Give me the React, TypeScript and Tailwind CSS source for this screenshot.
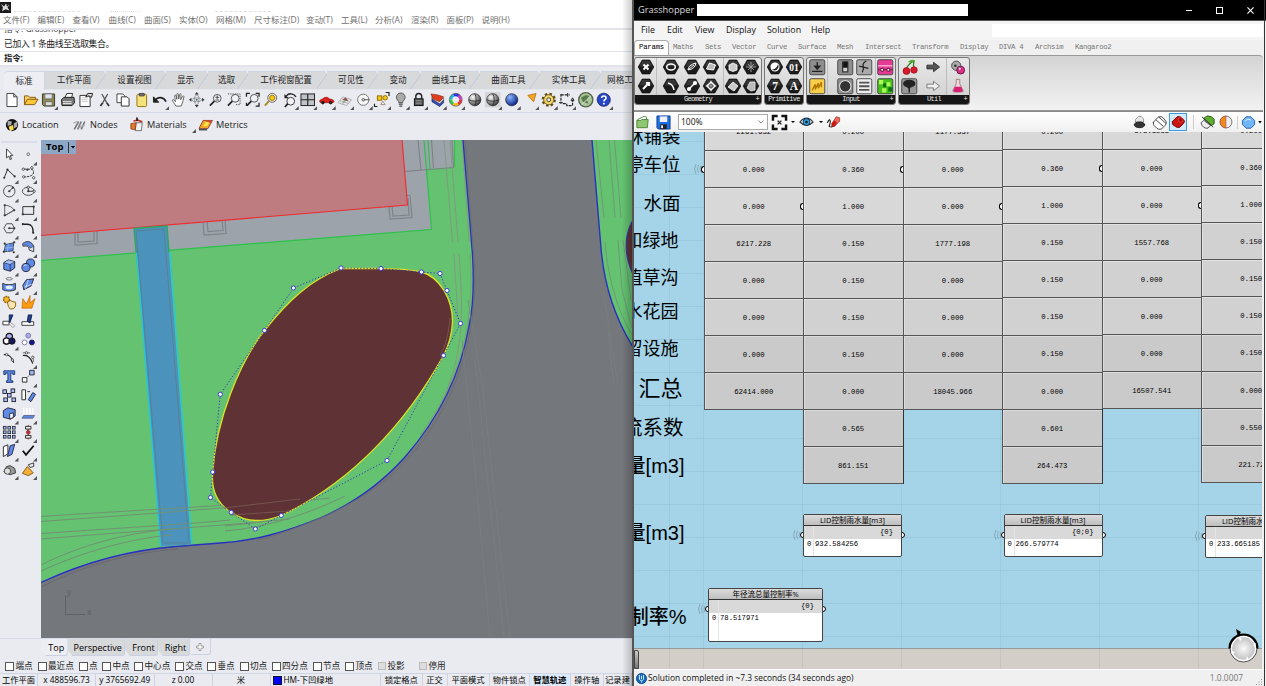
import type { ReactNode } from "react";

const UI = "font-['Open_Sans','Noto_Sans_CJK_SC',sans-serif]";

function Svg({ children, s = "w-4 h-4", vb = "0 0 16 16" }: { children: ReactNode; s?: string; vb?: string }) {
  return (
    <svg viewBox={vb} className={`${s} shrink-0 overflow-visible`} fill="none" stroke="#222" strokeWidth="1">
      {children}
    </svg>
  );
}

/* ---------- Rhino ---------- */

const menu: [string, string][] = [
  ["文件(F)", "w-[34.5px]"], ["编辑(E)", "w-[35px]"], ["查看(V)", "w-[36px]"], ["曲线(C)", "w-[35.5px]"],
  ["曲面(S)", "w-[35px]"], ["实体(O)", "w-[37px]"], ["网格(M)", "w-[38px]"], ["尺寸标注(D)", "w-[52px]"],
  ["变动(T)", "w-[35px]"], ["工具(L)", "w-[34px]"], ["分析(A)", "w-[36px]"], ["渲染(R)", "w-[35.5px]"],
  ["面板(P)", "w-[35px]"], ["说明(H)", "w-[35px]"],
];

const tabs: [string, string][] = [
  ["工作平面", "w-[61px]"], ["设置视图", "w-[60px]"], ["显示", "w-[42px]"], ["选取", "w-[40px]"],
  ["工作视窗配置", "w-[79px]"], ["可见性", "w-[51px]"], ["变动", "w-[43px]"], ["曲线工具", "w-[59px]"],
  ["曲面工具", "w-[60px]"], ["实体工具", "w-[61px]"], ["网格工", "w-[33px] pl-[8px]"],
];

const lens = <><circle cx="9.5" cy="6.5" r="4" fill="#eef2f6" stroke="#555" /><path d="M6.5 9.5L2 14" stroke="#222" strokeWidth="1.8" /></>;
const ball = (id: string, light: string, dark: string) => (
  <><defs><radialGradient id={id} cx=".35" cy=".3" r=".75"><stop offset="0" stopColor={light} /><stop offset="1" stopColor={dark} /></radialGradient></defs>
    <circle cx="8" cy="8" r="6.300" fill={`url(#${id})`} stroke="#222" strokeWidth=".7" /></>
);

const toolbar: { i: ReactNode; f?: boolean }[] = [
  { i: <path d="M3 1.5h7l3.500 3.500v10h-10.500zM10 1.500v3.500h3.500" fill="#fff" stroke="#444" /> },
  { i: <><path d="M1.500 13V4h4l1.500 1.500h6V8" fill="#f7d263" stroke="#8a5a10" /><path d="M1.500 13L4.500 7.500h11L12 13z" fill="#fbc63c" stroke="#8a5a10" /></> },
  { i: <><path d="M1.500 2h12.500v12.500h-11l-1.500-1.500z" fill="#8c8a52" stroke="#3c3b28" /><path d="M4 2h7.500v5H4z" fill="#dfe2ef" stroke="#555" strokeWidth=".6" /><path d="M4.500 10h7v4h-7z" fill="#ddd" stroke="#444" strokeWidth=".6" /></>, f: true },
  { i: <><path d="M5 6L7 1.500h6L12 6" fill="#fff" stroke="#333" /><path d="M1.500 8l2.500-2.500h10.500L15 11l-2.500 3H2z" fill="#777" stroke="#222" /><path d="M3 10h9M3 12h9" stroke="#eee" /></> },
  { i: <><path d="M2 3.500h8l2.500 2v9.500H2z" fill="#fff" stroke="#333" /><path d="M4 6h6M4 8h6M4 10h6" stroke="#aaa" strokeWidth=".7" /><path d="M8 5l2-3.500h5l-1 4-3-1.500z" fill="#ddd" stroke="#222" /></> },
  { i: <><path d="M5 2l5 9M11 2L6 11" stroke="#555" strokeWidth="1.300" /><path d="M6 11l-2.500 3.500M10 11l2.500 3.500" stroke="#333" strokeWidth="1.800" /></> },
  { i: <><path d="M2 2h6l2 2v7H2z" fill="#fff" stroke="#444" /><path d="M6.500 5h6l2 2v7.500h-8z" fill="#fff" stroke="#333" /></> },
  { i: <><rect x="3" y="2.500" width="10" height="12.500" rx="1" fill="#f6e27b" stroke="#96751b" /><path d="M5.500 1.500h5v2.500h-5z" fill="#777" stroke="#444" /></> },
  { i: <><path d="M3.500 8.500C6 4.500 12 5 14.500 10" stroke="#222" strokeWidth="1.700" /><path d="M1.500 5v5.500H7z" fill="#222" /></>, f: true },
  { i: <path d="M5 14.500C3.500 11.500 1.500 9.500 1.500 8.500s1.500-1 3 1.500L3.800 4c0-1.200 1.200-1.200 1.500 0L6 7.500V2.500c0-1.300 1.500-1.300 1.600 0L8 7.300l.9-4.800c.3-1.200 1.600-.9 1.500.3L10 8l1.900-3.500c.6-1 1.800-.4 1.400.8L12 10.500l-1.500 4z" fill="#fff" stroke="#555" strokeWidth=".9" /> },
  { i: <><ellipse cx="8" cy="8" rx="2.300" ry="5" stroke="#777" strokeWidth=".7" /><ellipse cx="8" cy="8" rx="5" ry="2" stroke="#777" strokeWidth=".7" /><path d="M8 0l2 2.500H6zM8 16l2-2.500H6zM0 8l2.500-2v4zM16 8l-2.500-2v4z" fill="#333" stroke="none" /><circle cx="8" cy="8" r="1" fill="#468" stroke="none" /></> },
  { i: <>{lens}<path d="M7.500 5.500h4M9.500 3.500v4M7.500 8.300h4" stroke="#333" strokeWidth=".8" /></> },
  { i: <>{lens}<path d="M2 2h12.500v11H10" stroke="#444" strokeDasharray="1.200 1.200" /></> },
  { i: <>{lens}<path d="M1.500 5V1.500H5M11 1.500h3.500V5M14.500 11v3.500H11M1.500 11v3.500" strokeWidth="1.300" /></> },
  { i: <><circle cx="9.500" cy="6" r="4.600" fill="#eee" stroke="#666" /><circle cx="9.500" cy="6" r="2.700" fill="#f7c914" stroke="#a67800" /><path d="M6 9.500L2 14" strokeWidth="2" stroke="#a58b22" /></> },
  { i: <><circle cx="9" cy="9.500" r="4" fill="#f2f2f2" stroke="#444" /><path d="M6 12L3 15.500" strokeWidth="1.800" /><path d="M4.500 4C7 1 12 1 14.500 5" strokeWidth="1.400" /><path d="M2.500 2v4.500H7z" fill="#222" stroke="none" /></>, f: true },
  { i: <><rect x="1" y="2" width="14" height="12" fill="#bfc2c7" stroke="#222" /><path d="M8 2v12M1 8h14" strokeWidth="1.200" /></>, f: true },
  { i: <><path d="M.5 9.500C1 7.500 3.500 7.700 4.500 6.500 6 5 9 5 10.500 7c1.500.5 4.500.5 5 3l-1 1H1.500z" fill="#df1f1c" stroke="#8e0d0d" strokeWidth=".7" /><circle cx="4" cy="11" r="1.300" fill="#333" stroke="#111" /><circle cx="12" cy="11" r="1.300" fill="#333" stroke="#111" /></>, f: true },
  { i: <><path d="M1 11L6 5l9 3-5 6zM3 9l9 3M5 7l8 3M5 13l6-6" stroke="#999" strokeWidth=".7" /><path d="M6 8l5 1-2-3z" fill="#666" stroke="#a33" strokeWidth=".6" /><path d="M8 9l-2 2" stroke="#3a3" /></>, f: true },
  { i: <><circle cx="7.500" cy="8" r="5.800" fill="#f5f5f5" stroke="#777" /><circle cx="7.500" cy="8" r="1.300" stroke="#555" /><path d="M8 8h6" stroke="#555" /></>, f: true },
  { i: <><rect x="3.500" y="4" width="4.500" height="4.500" fill="#f7c914" stroke="#946c00" /><circle cx="11.500" cy="6" r="2.300" fill="#f7c914" stroke="#946c00" /><path d="M7 13l2-3.500 2.500 3.500z" fill="#fff" stroke="#a87" /><path d="M12 .5h3.500V4M.5 12v3h3" strokeWidth="1.200" /></>, f: true },
  { i: <><path d="M6 11C6 9 3.500 8 3.500 5.500a4.500 4.500 0 019 0C12.500 8 10 9 10 11z" fill="#aaa" stroke="#555" /><path d="M6 12.500h4M6.500 14.500h3" stroke="#444" strokeWidth="1.300" /></>, f: true },
  { i: <><path d="M5 7V4.500a3 3 0 016 0V7" strokeWidth="1.500" /><rect x="3.500" y="7" width="9" height="7" fill="#555" stroke="#111" /><path d="M5 9h6M5 11.500h6" stroke="#999" /></>, f: true },
  { i: <><path d="M2 7l8 5 4-4v3l-4 4-8-5z" fill="#2e4fc0" stroke="#112" strokeWidth=".6" /><path d="M2 5l8 5 4-4v2l-4 4-8-5z" fill="#fff" stroke="#334" strokeWidth=".6" /><path d="M1 2l7 1 6 2-4 5-7-3z" fill="#e23c1c" stroke="#721" strokeWidth=".6" /></>, f: true },
  { i: <><circle cx="8" cy="8" r="5" stroke="#e33" strokeWidth="2.800" strokeDasharray="5.300 26.200" /><circle cx="8" cy="8" r="5" stroke="#f8b91a" strokeWidth="2.800" strokeDasharray="5.300 26.116" strokeDashoffset="-5.200" /><circle cx="8" cy="8" r="5" stroke="#3c4" strokeWidth="2.800" strokeDasharray="5.300 26.116" strokeDashoffset="-10.400" /><circle cx="8" cy="8" r="5" stroke="#2bd" strokeWidth="2.800" strokeDasharray="5.300 26.116" strokeDashoffset="-15.700" /><circle cx="8" cy="8" r="5" stroke="#33d" strokeWidth="2.800" strokeDasharray="5.300 26.116" strokeDashoffset="-20.900" /><circle cx="8" cy="8" r="5" stroke="#c3c" strokeWidth="2.800" strokeDasharray="5.300 26.116" strokeDashoffset="-26.100" /><circle cx="8" cy="8" r="6.600" stroke="#333" strokeWidth=".6" /></>, f: true },
  { i: <>{ball("b1", "#fff", "#333")}<path d="M8 2c2 2 2 10 0 12M2 8c3 2 9 2 12 0" stroke="#222" strokeWidth=".8" /></> },
  { i: <><path d="M0 0h16v16H0z" fill="#d4d5d8" stroke="none" />{ball("b2", "#fff", "#333")}<path d="M8 2c2 2 2 10 0 12M2 8c3 2 9 2 12 0" stroke="#222" strokeWidth=".8" /></>, f: true },
  { i: ball("b3", "#8db8ff", "#051c86"), f: true },
  { i: <><path d="M1 4l12-2.500L12 11z" fill="#f0e9dc" stroke="none" /><path d="M6 3.500l8.500-2L12 10z" fill="#f5a623" stroke="#a85d00" strokeWidth=".7" /></>, f: true },
  { i: <><circle cx="8" cy="8" r="5.800" stroke="#5d4b0e" strokeWidth="3" strokeDasharray="2.400 2.150" /><circle cx="8" cy="8" r="5.200" fill="#f3d568" stroke="#5d4b0e" strokeWidth=".8" /><circle cx="8" cy="8" r="2" fill="#eee" stroke="#443" /></>, f: true },
  { i: <><path d="M2 2v10M2 3h9M4 12h4v2h6V8" strokeWidth="1.200" strokeDasharray="3 1" /><path d="M9 1v4M14 6l-1.500 3h3zM0 11h4" /></>, f: true },
  { i: <><circle cx="8" cy="8" r="7.300" fill="#a9c795" stroke="#56634f" strokeWidth="1.400" /><path d="M3 6l5-3 4 1-3 4 2 4-6-2z" fill="#5a7b4e" stroke="none" /><path d="M4 13l9-9" stroke="#dde" strokeWidth="1" /></> },
  { i: <><circle cx="8" cy="8" r="6.800" fill="#2746c4" stroke="#13256c" strokeWidth=".8" /><path d="M5.800 6.300c0-3 4.600-3 4.600 0 0 1.700-2.300 1.600-2.300 3.400" stroke="#fff" strokeWidth="1.600" /><circle cx="8.100" cy="12" r="1" fill="#fff" stroke="none" /></>, f: true },
];

const dot = (x: number, y: number) => <circle cx={x} cy={y} r="1.200" fill="#333" stroke="none" />;
const ring = (x: number, y: number) => <circle cx={x} cy={y} r="1.300" fill="#fff" stroke="#222" strokeWidth=".8" />;
const cub = "#5f8ae6";
const side: { i: ReactNode; f?: boolean }[] = [
  { i: <path d="M5 2v10l2.500-2L9 14l1.500-.7L9 9.500h3z" fill="#fff" stroke="#333" /> },
  { i: <circle cx="8" cy="8" r="1.500" stroke="#666" />, f: true },
  { i: <><path d="M2.500 13L6 4l8 7.500" />{dot(2.5, 13)}{dot(6, 4)}{dot(14, 11.5)}</>, f: true },
  { i: <><path d="M3 3.500h9c4 3 2 9-9 8.500" strokeDasharray="3 1" />{ring(2.5, 3.5)}{ring(12, 2)}{ring(3, 12)}{ring(14, 13)}{dot(7, 4)}</>, f: true },
  { i: <><circle cx="8" cy="8" r="6.300" stroke="#444" /><path d="M8 8l4-4" />{dot(8, 8)}{dot(12, 4)}</>, f: true },
  { i: <><ellipse cx="8" cy="8" rx="6.500" ry="4.500" stroke="#444" /><path d="M8 4v4h6" />{ring(8, 3.5)}{dot(8, 8)}{ring(14.500, 8)}</>, f: true },
  { i: <><path d="M3 14V2.500C8 2.500 12 5 13.500 8zM3 14l10-6" stroke="#555" />{dot(3, 2.5)}{dot(3, 13.5)}{dot(13.5, 8)}</>, f: true },
  { i: <><path d="M2 4h12v8.500H2z" />{dot(2, 12.5)}{dot(14, 4)}</>, f: true },
  { i: <><path d="M2 8l3-5h6l3 5-3 5H5z" stroke="#444" /><path d="M8 8h5" />{dot(8, 8)}{dot(13.5, 8)}</>, f: true },
  { i: <><path d="M2 3.500h5c5 0 6.500 3 6.500 10" strokeWidth="1.600" />{dot(2, 3.5)}{dot(13.5, 13)}</>, f: true },
  { i: <><path d="M4 5l9-2-1 9-10 1z" fill={cub} stroke="#345" />{dot(3, 4)}{dot(13.5, 2.500)}{dot(2, 13)}{dot(13, 13.5)}<path d="M7 4L6 13M3 9l10-1" stroke="#bcd" strokeWidth=".6" /></>, f: true },
  { i: <><path d="M2 4c5-4 10-2 12 3v6l-5-2c0-4-3-5-6-4z" fill="#dbe4f6" stroke="#333" /><path d="M2 4c5-4 10-2 12 3l-4 2C8 5 5 5 2 7z" fill={cub} stroke="#333" strokeWidth=".6" /></>, f: true },
  { i: <><path d="M2 5l5-3 7 2v7l-5 3.500-7-2z" fill={cub} stroke="#223" /><path d="M2 5l7 2 5-3M9 7v7.500" stroke="#223" strokeWidth=".8" /><path d="M2.500 5L7 2.500l6.500 1.700L9 6.500z" fill="#a9c1f2" stroke="none" /></>, f: true },
  { i: <><circle cx="10.500" cy="5.500" r="4.500" fill={cub} stroke="#223" /><circle cx="5.500" cy="10.500" r="4.500" fill={cub} stroke="#223" /><path d="M3 9c1-1.300 2-1.500 3-1" stroke="#def" /></>, f: true },
  { i: <><ellipse cx="8" cy="2" rx="3.500" ry="1.300" stroke="#666" fill="#fff" /><path d="M.8 7v7c3 2 11 2 14 0V7c-3 2-11 2-14 0z" fill={cub} stroke="#333" /><ellipse cx="8" cy="11.500" rx="4" ry="2" fill="#e6eeff" stroke="none" /></>, f: true },
  { i: <><path d="M2 9l4-6 8-1-3 8-8 4z" fill={cub} stroke="#223" /><path d="M4 11l8-3M8 3l-3 10" stroke="#fff" strokeWidth=".7" /></>, f: true },
  { i: <><circle cx="5" cy="5" r="3.300" fill="#f7b52a" stroke="#8b5a00" strokeDasharray="2 .8" strokeWidth="1.500" /><path d="M6 8l3-2 2 1 4 1v4l-2 3-4 .5-2-3z" fill="#fae3b4" stroke="#8b5a00" /></> },
  { i: <path d="M1 14.500L2 4l4 6L10 .5l0 8L15.500 4 12 14.500z" fill="#f99a10" stroke="#c05f00" strokeWidth=".7" /> },
  { i: <><path d="M1 8h7v4H1z" stroke="#333" fill="#fff" /><path d="M8 1l4 0-4 10z" fill="#1b3f98" stroke="#124" /><path d="M9 9l5 4-2 2-4-4z" stroke="#888" fill="#fff" /></> },
  { i: <><path d="M1 8.500h13v4H1z" fill="#fff" stroke="#333" /><path d="M8 1h4l-2 9-3-2z" fill="#1b3f98" stroke="#124" /></> },
  { i: <><circle cx="8" cy="5" r="3.500" fill="#aab0f0" stroke="#111" strokeWidth="1.300" /><circle cx="5" cy="10" r="3.500" fill="#fff" stroke="#111" strokeWidth="1.500" /><circle cx="11" cy="10" r="3.500" fill="#15185c" stroke="#111" /></>, f: true },
  { i: <><circle cx="8" cy="4" r="2.700" fill="#a7aaf0" stroke="#779" /><circle cx="4" cy="11.500" r="2.700" fill="#fff" stroke="#779" /><circle cx="12" cy="11.500" r="2.700" fill="#15188c" stroke="#114" /></> },
  { i: <><path d="M2 4c6-1 9 3 11 9" strokeWidth="1.200" />{ring(5, 4)}{ring(11.500, 10)}</> },
  { i: <><path d="M2 5c6-1 9 3 11 9" strokeWidth="1.200" /><path d="M2 2h8M13 6l1 6" stroke="#666" />{ring(6, 2)}{ring(13, 7)}</>, f: true },
  { i: <path d="M2 2h12v4h-2V4.500h-2.300V13H12v1.800H5V13h1.500V4.500H4V6H2z" fill={cub} stroke="#1d3574" /> },
  { i: <><path d="M9.500 1.500h5v5h-5z" fill="#9cb8f2" stroke="#223" /><path d="M1.500 9.500h5v5h-5z" fill="#fff" /><path d="M7 9l2-2" strokeDasharray="1 1" /></>, f: true },
  { i: <>{[[1, 2], [10, 1], [6, 6], [2, 11], [11, 11]].map(([x, y]) => <rect key={`${x}-${y}`} x={x} y={y} width="4" height="4" fill="#a9c1f2" stroke="#223" />)}</> },
  { i: <><path d="M1 2h4v11H1z" fill="#fff" /><path d="M7 4h3M8 13l5-8 3 2-5 8z" fill={cub} stroke="#224" /></> },
  { i: <><path d="M1.500 5l5-3 8 2v7l-5 3.500-8-2z" fill={cub} stroke="#223" /><path d="M8.500 8.500l4-1v5l-4 2z" fill="#fff" stroke="#223" /></>, f: true },
  { i: <><path d="M3 9V2M6.500 9V2M10 9V2M13 9V2" stroke="#fff" strokeWidth="1.600" /><path d="M1 13.500l2-3h12l-2 3z" fill={cub} stroke="#446" strokeWidth=".7" /></>, f: true },
  { i: <>{[2, 7, 12].map((x) => [2, 7, 12].map((y) => <rect key={`${x}-${y}`} x={x - 0.5} y={y - 0.5} width="3" height="3" fill="#a9c1f2" stroke="#223" strokeWidth=".9" />))}</>, f: true },
  { i: <><path d="M8 0v16" stroke="#d33" strokeWidth="1.200" /><path d="M5 1.500h6v3H5zM5 11.500h6v3H5z" fill="#eee" /><circle cx="8" cy="8" r="2" fill="#c33" stroke="#733" /></>, f: true },
  { i: <><path d="M1.500 4l5-2v10l-5 3z" fill="#fff" /><path d="M9 3l5-1.500-3 11-5 2.500z" fill={cub} stroke="#224" /></>, f: true },
  { i: <path d="M2 8.500l3.500 4.500L14 3" strokeWidth="2" stroke="#111" />, f: true },
  { i: <><path d="M2 11l3-6 4-1 5 3 1 5-6 2z" fill="#9a9a9a" stroke="#333" /><circle cx="6" cy="10" r="3.500" fill="#ddd" stroke="#444" /></>, f: true },
  { i: <><path d="M8 3l6-2v4l-4 1z" fill="#eee" stroke="#333" /><path d="M1.500 12.500L7 5l6.500 7L8 15z" fill="#f5b03a" stroke="#7d5510" /></>, f: true },
];

function Tri({ show }: { show?: boolean }) {
  if (!show) return null;
  return <span className="absolute right-0 bottom-[-2px] w-1 h-1 bg-[#555] [clip-path:polygon(100%_0,100%_100%,0_100%)]" />;
}

function Viewport() {
  const pts = [[341, 268], [381, 268.5], [421.5, 272], [440, 273.500], [447, 290.500], [460.500, 323.500], [443.500, 355.500], [387, 460.500], [281.300, 515.500], [255.300, 529], [231.200, 512.300], [210.500, 497.500], [212.700, 472], [220.300, 394.300], [264.500, 330.500], [293.500, 288]];
  const edge = "M463 140L472.500 255Q475 300 469 326C461 372 440 417 405 457C380 485 350 505 320 518C285 532 255 541 220 543L176 546.500C130 550 85 562 41 582.500";
  return (
    <div className="relative w-[591px] h-[498px] overflow-hidden">
      <svg viewBox="41 140 591 498" className="block w-[591px] h-[498px]" fill="none">
        <rect x="41" y="140" width="591" height="498" fill="#74777c" />
        <path d={`${edge}V140z`} fill="#64c271" />
        <path d="M592 140L601 248C604 285 615 318 633 347V140z" fill="#64c271" />
        <path d="M41 235L407 205L402 140H454V167L426 169L431.500 229L41 260z" fill="#9da3ab" />
        <path d="M424 140L431.500 229.500L41 260.500M428 140L430 169M454.500 140v27" stroke="#2fc04f" strokeWidth="1.200" />
        <path d="M404 171.500L454 167.500M418 140L421 170M431.500 140L433.500 168M452 140l1.500 27" stroke="#7c7f82" />
        <g stroke="#7f8488" strokeWidth="1.200">
          <path d="M75 232v13l22-1.500V231M78 232v10l16-1V232" />
          <path d="M203 221l1 14 22-1.500-1-14M207 221l1 10.500 15-1-1-10.500" />
          <path d="M389 206l1 13 22-1.500-2-22h-4M392 206l1 10 16-1-1-17" />
        </g>
        <path d="M41 140H402L407.500 205L41 235.500z" fill="#be7c81" />
        <path d="M402 140L407.500 205L41 235.500" stroke="#ef2b30" strokeWidth="1.100" />
        <path d="M444 140L452.500 243M450 140L458 242M462 140L469 242M454 254L458 320M459 254C463 310 466 360 435 415M470 254C476 330 455 390 420 435" stroke="#809b80" />
        <path d="M596 140L604 218M609 140L615 218M614.500 140L621 218M605 242C608 282 620 315 632 335M618 240L622 290L632 328M623 240L631 300" stroke="#6f9a75" />
        <path d={edge} stroke="#2930c0" strokeWidth="1.300" />
        <path d="M465 140L474.500 265C478 345 450 420 395 472C365 500 310 526 256 541" stroke="#6a6e73" />
        <path d="M592 140L601 248C604 285 615 318 633 347" stroke="#2a30c4" strokeWidth="1.400" />
        <path d="M634 218C623 235 624 258 634 276z" fill="#5f3335" stroke="#2a30c4" />
        <path d="M134 228L167 226L191 544.500L160.500 546.500z" fill="#4b93bd" />
        <path d="M136.500 253L160.500 546M170 252L192 544" stroke="#20cbe0" strokeWidth="1.300" />
        <path d="M136 252L134 228.500L167 226L169 252" stroke="#2ba866" strokeWidth="1.400" />
        <path d="M163 543L136 231L164 229L189 543z" stroke="#5a7f93" />
        <path d="M41 516.500C150 509 240 506 300 498M41 521.500C160 513 280 504 330 498M41 533.500C150 526 190 524 230 520M41 539C150 530 220 526 290 519M41 565C80 545 130 532 174 529M41 571C80 553 130 538 172 535M225 526L262 522M225 531C260 528 300 518 345 496" stroke="#729173" />
        <path d="M41 587C90 563 130 553 178 549" stroke="#6a6970" />
        <path d="M341 268.500L381 268.500C400 269 410 269 421.500 272C440 277 452.500 300 452.500 321C452 334 449 345 443.500 355.500C405 425 350 483 281.300 515.500C262 523 245 522 231.200 512.300C218 504 211 490 212.700 472C216 420 240 362 264.500 330.500C288 301 310 280 341 268.500z" fill="#5f3335" stroke="#dde322" strokeWidth="1.300" />
        <path d="M450 318C448 340 444 348 440 355M224 508L300 499M230 515L290 511" stroke="#7c5b55" strokeWidth=".8" />
        <path d={`M${pts.map((p) => p.join(" ")).join("L")}z`} stroke="#3438b8" strokeWidth="1" strokeDasharray="1.200 2" />
        {pts.map(([x, y]) => <circle key={`${x},${y}`} cx={x} cy={y} r="2.100" fill="#fff" stroke="#3a3fd0" strokeWidth="1" />)}
        <path d="M468 300L483 390L510 637M475 360L504 637M462 340L475 470L490 637M603 290L618 385M608 330L614 385" stroke="#7d817f" strokeWidth=".7" />
        <path d="M65.500 595v19.500H85" stroke="#5e6266" />
        <text x="67" y="594.500" fontSize="8.500" fill="#5c6064" fontFamily="Open Sans, sans-serif">y</text>
        <text x="87" y="614.500" fontSize="8.500" fill="#5c6064" fontFamily="Open Sans, sans-serif">x</text>
      </svg>
      <div className="absolute left-0 top-0 w-[34.5px] h-[14px] bg-[#8ca8c6] flex items-center pl-[5px] text-[9.500px] font-bold text-black leading-none">
        <span className="w-[22px]">Top</span>
        <span className="w-px h-[11px] bg-[#333]" />
        <span className="ml-[1.500px] w-[5px] h-[3px] bg-black [clip-path:polygon(0_0,100%_0,50%_100%)]" />
      </div>
    </div>
  );
}

const osnaps: [string, string][] = [
  ["端点", "w-[32.5px]"], ["最近点", "w-[41px]"], ["点", "w-[23.5px]"], ["中点", "w-[32px]"], ["中心点", "w-[41px]"],
  ["交点", "w-[32px]"], ["垂点", "w-[32.5px]"], ["切点", "w-[32px]"], ["四分点", "w-[41px]"], ["节点", "w-[32.5px]"],
  ["顶点", "w-[33px]"], ["投影", "w-[41px]"], ["停用", "w-[40px]"],
];

const statusCells: [string, string][] = [
  ["工作平面", "w-[38px]"], ["x 488596.73", "w-[58px]"], ["y 3765692.49", "w-[58.5px]"], ["z 0.00", "w-[58px]"], ["米", "w-[58px]"],
  ["HM-下凹绿地", "w-[110.500px]"], ["锁定格点", "w-[41.500px]"], ["正交", "w-[25px]"], ["平面模式", "w-[42px]"], ["物件锁点", "w-[40.500px]"],
  ["智慧轨迹", "w-[40.500px]"], ["操作轴", "w-[33.500px]"], ["记录建", "w-[28px]"],
];

function Rhino() {
  return (
    <section className={`relative w-[632px] h-[686px] shrink-0 overflow-hidden bg-[#e9ebf0] ${UI} text-[8.6px] leading-none text-[#222] flex flex-col whitespace-nowrap`}>
      <div className="h-[13px] shrink-0 bg-white flex items-start pt-[2px]">
        <div className="w-[11px] h-[10.500px] bg-[#1a1a1a]"><Svg s="w-[11px] h-[10.500px]"><path d="M1 3l5 4 2-4 6 2-3 3 3 5-6-2-5 3 1-6z" fill="#ddd" stroke="none" /><circle cx="11" cy="5" r="1.500" fill="#111" stroke="none" /></Svg></div>
        <div className="mt-[9px] ml-[3px] h-px w-[66px] border-t border-dashed border-[#e2e2e2]" />
        <div className="mt-[9px] ml-[30px] h-px w-[30px] border-t border-dotted border-[#e2e2e2]" />
        <div className="mt-[9px] ml-[75px] h-px w-[56px] border-t border-dashed border-[#dedede]" />
      </div>
      <nav className="h-[15px] shrink-0 bg-white flex items-center pl-[3px] text-[8.500px] text-[#707070]">
        {menu.map(([t, w]) => <span key={t} className={`${w} shrink-0`}>{t}</span>)}
      </nav>
      <div className="h-[24px] shrink-0 border-t-2 border-b border-[#e2e4ea] bg-white pl-[4px] overflow-hidden text-[8.500px]">
        <div className="h-[6px] -mt-[5px] text-[#444]">指令: Grasshopper</div>
        <div className="mt-[6.500px] h-[12px] leading-[12px] tracking-[-0.350px] text-[8.800px]">已加入 1 条曲线至选取集合。</div>
      </div>
      <div className="h-[15px] shrink-0 border-b-2 border-[#e2e4ea] bg-white pl-[4px] leading-[12px] font-bold text-[8.300px]">指令:</div>
      <div className="h-[23px] shrink-0 pt-[4px] pl-[4px] flex bg-[#e9ebf0] border-b border-[#e3e6ec]">
        <div className="w-[41px] shrink-0 h-[19px] border-t border-r border-[#cfd6e4] rounded-tl-[4px] bg-[#eceef3] flex items-center justify-center">标准</div>
        {tabs.map(([t, w]) => (
          <div key={t} className={`relative ${w} shrink-0 h-[18px] border-t border-[#cdd4e2] bg-[#d8d9db] flex items-center justify-center pr-[3px]`}>
            {t}
            <span className="absolute right-[4px] top-0 h-full w-px bg-[#bfc7da] -skew-x-[35deg]" />
            <span className="absolute right-[-3px] top-[-1px] h-[4px] w-[5px] bg-[#e9ebf0] [clip-path:polygon(0_0,100%_0,50%_100%)]" />
          </div>
        ))}
      </div>
      <div className="h-[23px] shrink-0 flex pt-[2px] pl-[2.750px] border-b border-[#d7dbe8]">
        {toolbar.map((t, k) => (
          <span key={k} className="relative w-[18.500px] h-[16px] shrink-0 flex items-center justify-center">
            <Svg s="w-[15.500px] h-[15.500px]">{t.i}</Svg><Tri show={t.f} />
          </span>
        ))}
      </div>
      <div className="h-[27px] shrink-0 flex items-start pt-[3px] pl-[5px] text-[9.200px]">
        <div className="flex items-center w-[67px] gap-[3px] h-[17px]"><Svg s="w-[14px] h-[14px]"><circle cx="8" cy="8" r="7" fill="#111" stroke="none" /><path d="M3 3l5 1-1 4-4 1zM10 6l4-2 0 6-4 2z" fill="#a9a9a9" stroke="none" /><path d="M4 10l5-2 1 5-4 2z" fill="#f8d94b" stroke="none" /></Svg>Location</div>
        <div className="flex items-center w-[58px] gap-[3px] h-[17px]"><Svg s="w-[15px] h-[14px]"><path d="M2 13L7 4M6 13l4-9M10 13l4-9" stroke="#777" strokeWidth="1.800" /><path d="M1 6l4-2M7 11l7-3" stroke="#aaa" strokeWidth="1.500" /></Svg>Nodes</div>
        <div className="relative flex items-center w-[68px] gap-[3px] h-[17px]"><Svg s="w-[14px] h-[15px]"><path d="M7 6l7 0-1 9H6z" fill="#f1f3f5" stroke="#666" /><path d="M1 7l6-1-1 8-5-1z" fill="#e27926" stroke="#842" /><path d="M4 4l5-1 5 2" stroke="#c0392b" strokeWidth="2" /><path d="M8 0v4" strokeWidth="2" /></Svg>Materials<span className="absolute right-[2px] bottom-0 w-1 h-1 bg-[#555] [clip-path:polygon(100%_0,100%_100%,0_100%)]" /></div>
        <div className="flex items-center gap-[3px] h-[17px]"><Svg s="w-[15px] h-[13px]"><path d="M0 13L5 3h11.500L11 13z" fill="#f5a522" stroke="#733" /><path d="M5 10l3-5h5l-3 5z" fill="#f9e34b" stroke="none" /><path d="M5 3h11.500l-2 3.500-4-2z" fill="#d8482a" stroke="none" /><path d="M0 14.500h10" stroke="#333" strokeWidth="1.500" /></Svg>Metrics</div>
      </div>
      <div className="flex h-[498px] shrink-0">
        <aside className="w-[41px] shrink-0 pt-[4px]">
          <div className="-mt-[3px] mb-[2px] ml-[1px] h-[2px] w-[36px] bg-[#dadde9]" />
          <div className="grid grid-cols-[18.500px_18.500px] auto-rows-[18.500px]">
            {side.map((t, k) => (
              <span key={k} className="relative flex items-center justify-center">
                <Svg s="w-[14.500px] h-[14.500px]">{t.i}</Svg><Tri show={t.f} />
              </span>
            ))}
          </div>
        </aside>
        <Viewport />
      </div>
      <div className="h-[21px] shrink-0 flex items-start pl-[41px] text-[9px] text-black border-t border-[#d8dce8]">
        {([["Top", "w-[26.500px] bg-[#eceef3] pl-[5px]"], ["Perspective", "w-[57.500px] bg-[#d8d9db] pl-[4px]"], ["Front", "w-[33px] bg-[#d8d9db] pl-[5px]"], ["Right", "w-[32px] bg-[#d8d9db] pl-[4px]"]] as const).map(([t, c]) => (
          <span key={t} className={`${c} h-[17px] shrink-0 flex items-center justify-center pt-[1px] border-r border-b border-[#cbd1e2] rounded-br-[3px] [clip-path:polygon(0_0,100%_0,100%_100%,5px_100%,0_11px)]`}>{t}</span>
        ))}
        <span className="w-[21px] h-[16px] flex items-center justify-center border-r border-b border-[#cbd1e2] rounded-b-[3px]"><Svg s="w-[8px] h-[8px]"><path d="M6 1h4v5h5v4h-5v5H6v-5H1V6h5z" stroke="#888" strokeWidth="1.500" fill="#fff" /></Svg></span>
      </div>
      <div className="h-[14px] shrink-0 flex items-center pl-[5px]">
        {osnaps.map(([t, w], k) => (
          <span key={t} className={`${w} shrink-0 flex items-center gap-[1.500px]`}>
            <span className={k > 10 ? "w-[8px] h-[8px] border border-[#bbb] bg-[#ddd]" : "w-[9px] h-[9px] border border-[#555] bg-white"} />{t}
          </span>
        ))}
      </div>
      <div className="h-[13px] shrink-0 flex border-t border-[#cfd5e5] text-[8.300px] text-black">
        {statusCells.map(([t, w], k) => (
          <span key={t} className={`${w} shrink-0 h-[12px] flex items-center border-r border-[#cdd3e3] ${k === 5 ? "pl-[2px] gap-[2px]" : "justify-center"} ${k === 10 ? "bg-[#dceafa] font-bold" : ""}`}>
            {k === 5 && <span className="w-[9px] h-[9px] bg-[#0000f5] border border-[#113]" />}{t}
          </span>
        ))}
      </div>
      <div className="absolute right-0 top-0 h-full w-[10px] bg-gradient-to-r from-transparent to-black/20" />
    </section>
  );
}

/* ---------- Grasshopper ---------- */

const ghTabs: [string, string][] = [
  ["Maths", "w-[32px]"], ["Sets", "w-[27px]"], ["Vector", "w-[35px]"], ["Curve", "w-[31px]"], ["Surface", "w-[39px]"],
  ["Mesh", "w-[28px]"], ["Intersect", "w-[47px]"], ["Transform", "w-[48px]"], ["Display", "w-[39px]"], ["DIVA 4", "w-[36px]"],
  ["Archsim", "w-[40px]"], ["Kangaroo2", "w-[40px]"],
];

function Hex({ children, t }: { children?: ReactNode; t?: string }) {
  return (
    <Svg s="w-[16px] h-[16px]">
      <path d="M4.200 1h7.600L15.800 8l-4 7H4.200L.2 8z" fill="#1b1b1b" stroke="#000" strokeWidth=".6" />
      <path d="M4.600 1.800h6.800L14.500 7.500h-13z" fill="#4a4a4a" stroke="none" opacity=".6" />
      {t ? <text x="8" y="12" textAnchor="middle" fontSize={t.length > 1 ? "9.500" : "11.500"} fontWeight="bold" fill="#fff" stroke="none" fontFamily="Liberation Serif, serif">{t}</text> : <g stroke="#fff" strokeWidth="1.500">{children}</g>}
    </Svg>
  );
}

function Btn({ children, bg = "#8e8e8e" }: { children: ReactNode; bg?: string }) {
  return <Svg s="w-[16.500px] h-[16.500px]"><rect x=".7" y=".7" width="14.600" height="14.600" rx="1.500" fill={bg} stroke="#444" strokeWidth=".9" />{children}</Svg>;
}

function Group({ name, w, children, plus }: { name: string; w: string; children: ReactNode; plus?: boolean }) {
  return (
    <div className={`${w} shrink-0 h-[48px] rounded-[3px] border border-[#777] bg-gradient-to-b from-[#e8e8e8] to-[#cfcfcf] overflow-hidden flex flex-col`}>
      <div className="flex-1 flex items-stretch">{children}</div>
      <div className="relative h-[9px] bg-[#161616] text-center text-[7px] leading-[8px] tracking-[-0.700px] text-[#e8e8e8] font-['Liberation_Mono',monospace]">{name}{plus && <span className="absolute right-[2px] top-0">+</span>}</div>
    </div>
  );
}

function Cols({ w, items, sep }: { w: string; items: [ReactNode, ReactNode]; sep?: boolean }) {
  return <div className={`${w} shrink-0 flex flex-col items-center justify-center gap-[2.500px] ${sep ? "border-r border-[#bdbdbd]" : ""}`}>{items[0]}{items[1]}</div>;
}

const labels: [string, string][] = [
  ["林铺装", "h-[14px] items-end text-[18.500px] pr-[23px]"],
  ["停车位", "h-[38px] text-[18.500px] pr-[23px]"],
  ["水面", "h-[40px] text-[18.500px] pr-[23px]"],
  ["和绿地", "h-[34px] text-[18px] pr-[25px]"],
  ["植草沟", "h-[40px] text-[18px] pr-[25px]"],
  ["水花园", "h-[28px] text-[18px] pr-[25px]"],
  ["留设施", "h-[46px] text-[18px] pr-[25px]"],
  ["汇总", "h-[34px] text-[22px] pr-[21px]"],
  ["流系数", "h-[44px] text-[20.500px] pr-[20px]"],
  ["水量[m3]", "h-[32px] text-[20px] pr-[19px] font-medium"],
  ["水量[m3]", "h-[102px] text-[20px] pr-[19px] font-medium"],
  ["控制率%", "h-[66px] text-[20px] pr-[17px] font-medium"],
];

const columns: { c: string; v: string[] }[] = [
  { c: "mt-[-18.500px]", v: ["2261.632", "0.000", "0.000", "6217.228", "0.000", "0.000", "0.000", "62414.000"] },
  { c: "mt-[-18.500px]", v: ["0.200", "0.360", "1.000", "0.150", "0.150", "0.150", "0.150", "0.000", "0.565", "861.151"] },
  { c: "mt-[-18.500px]", v: ["1177.337", "0.000", "0.000", "1777.198", "0.000", "0.000", "0.000", "18045.966"] },
  { c: "mt-[-19px]", v: ["0.200", "0.360", "1.000", "0.150", "0.150", "0.150", "0.150", "0.000", "0.601", "264.473"] },
  { c: "mt-[-19.500px]", v: ["878.1588", "0.000", "0.000", "1557.768", "0.000", "0.000", "0.000", "16507.541"] },
  { c: "mt-[-20px]", v: ["0.200", "0.360", "1.000", "0.150", "0.150", "0.150", "0.150", "0.000", "0.550", "221.72"] },
];

function Waves() {
  return <Svg s="w-[9px] h-[12px]" vb="0 0 9 12"><path d="M2 1Q-1 6 2 11M4.500 2Q2 6 4.500 10M7 3Q5 6 7 9" stroke="#789aa8" strokeWidth=".7" /></Svg>;
}

function Panel({ pos, title, path, value, size }: { pos: string; title: string; path?: string; value: string; size: string }) {
  return (
    <div className={`absolute ${pos} ${size}`}>
      <span className="absolute -left-[10px] top-[15px]"><Waves /></span>
      <span className="absolute -left-[3px] top-[18px] w-[6px] h-[6px] rounded-full border-[1.500px] border-black bg-white" />
      <span className="absolute -right-[3px] top-[18px] w-[6px] h-[6px] rounded-full border-[1.500px] border-black bg-white" />
      <div className="relative w-full h-full border border-[#444] rounded-[2px] bg-white overflow-hidden flex flex-col font-['Liberation_Mono',monospace] text-[7.200px] text-black leading-none">
        <div className="h-[11px] shrink-0 border-b border-[#333] bg-gradient-to-b from-[#dcdcdc] to-[#bebebe] text-center text-[7.500px] leading-[10px] font-['Open_Sans','Noto_Sans_CJK_SC',sans-serif] whitespace-nowrap">{title}</div>
        <div className="h-[12.500px] shrink-0 bg-[#d9d9d9] flex items-center justify-end pr-[8px]">{path}</div>
        <div className="flex items-start pt-[2px] pl-[3px]"><span className="w-[8px]">0</span><span>{value}</span></div>
        <span className="absolute left-[9px] top-[11px] bottom-0 w-px bg-[#e4e4e4]" />
      </div>
    </div>
  );
}

function Port({ pos }: { pos: string }) {
  return <span className={`absolute ${pos} w-[3px] h-[7px] rounded-l-full border-[1.500px] border-r-0 border-black bg-white`} />;
}

function Grasshopper() {
  return (
    <section className={`w-[634px] h-[686px] shrink-0 bg-[#f0f0f0] border-l-2 border-[#555] flex flex-col overflow-hidden ${UI} leading-none text-[#111] whitespace-nowrap`}>
      <header className="h-[21px] shrink-0 bg-black flex items-center text-[#ddd] pl-[4px] text-[9.300px] border-b border-[#555]">
        <span className="w-[59px]">Grasshopper -</span>
        <span className="w-[271px] h-[12px] bg-white" />
        <div className="ml-auto flex items-center w-[80px] justify-between pr-[12px]">
          <span className="w-[6px] h-px bg-white" />
          <span className="w-[7px] h-[7px] border border-white" />
          <Svg s="w-[7px] h-[7px]"><path d="M1 1l14 14M15 1L1 15" stroke="#fff" strokeWidth="2.500" /></Svg>
        </div>
      </header>
      <nav className="h-[19px] shrink-0 bg-[#f4f4f4] flex items-center pl-[7px] text-[8.900px] relative">
        <span className="w-[26px]">File</span><span className="w-[28px]">Edit</span><span className="w-[31px]">View</span><span className="w-[41px]">Display</span><span className="w-[44px]">Solution</span><span>Help</span>
        <span className="ml-auto mr-[3px] w-[271px] h-[13px] bg-white" />
      </nav>
      <div className="h-[15px] shrink-0 flex items-center text-[7.300px] tracking-[-0.350px] font-['Liberation_Mono',monospace] text-[#777]">
        <span className="w-[35px] h-[15px] mr-[4px] bg-white border border-b-0 border-[#aaa] rounded-t-[4px] flex items-center justify-center text-black tracking-[-0.200px]">Params</span>
        {ghTabs.map(([t, w]) => <span key={t} className={`${w} shrink-0`}>{t}</span>)}
      </div>
      <div className="h-[56px] shrink-0 mr-[3px] border-t border-b border-[#999] rounded-tr-[4px] bg-gradient-to-b from-[#d4d4d4] to-[#f2f2f2] flex pt-[1px] gap-[2px]">
        <Group name="Geometry" w="w-[128px]" plus>
          <Cols w="w-[22px]" sep items={[<Hex><path d="M5.500 5.500l5 5M10.500 5.500l-5 5" strokeWidth="2" /></Hex>, <Hex><path d="M5 11l6-6M8 5h3v3" strokeWidth="2" /></Hex>]} />
          <Cols w="w-[26px] pl-[2px]" items={[<Hex><ellipse cx="8" cy="8" rx="4.300" ry="3" /></Hex>, <Hex><path d="M5 5q5 1 6 7" /></Hex>]} />
          <Cols w="w-[18.500px]" items={[<Hex><path d="M4 11q0-5 8-7-1 6-8 7zM5 10l5-4" strokeWidth="1" /></Hex>, <Hex><path d="M5 11l6-6" /><circle cx="5" cy="11" r="1.300" fill="#fff" /><circle cx="11" cy="5" r="1.300" fill="#fff" /></Hex>]} />
          <Cols w="w-[22px] pr-[3px]" sep items={[<Hex><path d="M3.500 10l3-6 6 2-2 5z" fill="#bbb" strokeWidth="1" /></Hex>, <Hex><path d="M8 4l4 4-4 4-4-4z" /><path d="M8 2.500v11M2.500 8h11" strokeWidth=".6" /></Hex>]} />
          <Cols w="w-[18px]" items={[<Hex><path d="M4 6l4-2 4 2v5l-4 1.500-4-1.500z" fill="#ccc" strokeWidth=".8" /></Hex>, <Hex><path d="M3 9l5-5 5 4-4 5z" fill="#ccc" strokeWidth=".8" /></Hex>]} />
          <Cols w="w-[19px]" items={[<Hex><path d="M8 3v10M3 8h10M5 5l6 6M11 5l-6 6" strokeWidth=".9" stroke="#aaa" /></Hex>, <Hex><path d="M4 10l3-6h5v8l-4 1z" fill="#bbb" stroke="#eee" strokeWidth=".8" /></Hex>]} />
        </Group>
        <Group name="Primitive" w="w-[40px]">
          <Cols w="w-[19.500px]" items={[<Hex><circle cx="8" cy="8" r="3.800" fill="#fff" /><path d="M11 5.500a4 4 0 01-6 5q4 0 6-5z" fill="#222" stroke="none" /></Hex>, <Hex t="7" />]} />
          <Cols w="w-[18px]" items={[<Hex t="01" />, <Hex t="A" />]} />
        </Group>
        <Group name="Input" w="w-[90px]" plus>
          <Cols w="w-[21px]" sep items={[<Btn><path d="M3 12h10M8 3v6M5.500 7h5L8 10z" strokeWidth="1.300" fill="#111" /></Btn>, <Btn bg="#f9cf4a"><path d="M3 12l3-6v5l3-6v5l3-6v5" stroke="#b37600" strokeWidth="1.300" /></Btn>]} />
          <Cols w="w-[28px] pl-[6px]" items={[<Btn><rect x="5.500" y="3" width="5" height="9.500" fill="#ccc" /><path d="M6 3h4v5H6z" fill="#111" /></Btn>, <Btn><circle cx="8" cy="8" r="5.500" fill="#333" stroke="#ddd" /></Btn>]} />
          <Cols w="w-[20px] pr-[3px]" sep items={[<Btn bg="#aaa"><path d="M10 2q-4 2-3 5t-1 6M3 7l9 2" strokeWidth="1.200" /></Btn>, <Btn bg="#eee"><path d="M3 4.500h10M3 8h10M3 11.500h10" strokeWidth="1.800" stroke="#555" /></Btn>]} />
          <Cols w="w-[19px]" items={[<Btn bg="#e83a94"><path d="M1 6.500h14" stroke="#f9a6d0" strokeWidth="1.500" /><path d="M1 10.500h14" stroke="#8d1054" /><circle cx="5" cy="10.500" r="1.500" fill="#fff" stroke="#5d133b" /><circle cx="11" cy="10.500" r="1.500" fill="#fff" stroke="#5d133b" /></Btn>, <Btn bg="#46c21e"><path d="M2 2h4v4H2zM9 4h4v4H9zM5 10h4v4H5z" fill="#b0ff57" stroke="none" /><path d="M6 5h3v4H6zM11 9h4v4h-4z" fill="#0a6e10" stroke="none" /></Btn>]} />
        </Group>
        <Group name="Util" w="w-[72px]" plus>
          <Cols w="w-[21px]" items={[<Svg s="w-[16px] h-[16px]"><path d="M4 10Q7 4 12 2Q11 6 12 9" stroke="#2e7d1d" strokeWidth="1.200" /><path d="M6 3q4-4 7-1-4 3-7 1z" fill="#4caf2e" stroke="none" /><circle cx="4.500" cy="12" r="3.500" fill="#d71a2c" stroke="#700" strokeWidth=".5" /><circle cx="12" cy="11" r="3.300" fill="#d71a2c" stroke="#700" strokeWidth=".5" /></Svg>, <Btn bg="#999"><path d="M8 14V7M8 10L5 7M8 9l3-2" strokeWidth="1.500" /><ellipse cx="8" cy="5.500" rx="5.500" ry="3.300" fill="#222" /></Btn>]} />
          <Cols w="w-[27px]" sep items={[<Svg s="w-[15px] h-[16px]"><path d="M1 6h7V3l6.500 5L8 13v-3H1z" fill="#555" stroke="#333" /></Svg>, <Svg s="w-[15px] h-[16px]"><path d="M1 6h7V3l6.500 5L8 13v-3H1z" fill="#eee" stroke="#777" /></Svg>]} />
          <Cols w="w-[22px]" items={[<Svg s="w-[14px] h-[15px]"><circle cx="6" cy="6" r="5.300" fill="#aaa" stroke="#444" /><circle cx="5" cy="6" r="1.500" fill="#333" stroke="none" /><circle cx="11" cy="11" r="4.500" fill="#dc2f86" stroke="#5d133b" /><circle cx="10" cy="9.500" r="1.200" fill="#fff" stroke="none" /></Svg>, <Svg s="w-[14px] h-[15px]"><path d="M6 1h4v5l4 8q0 1.500-2 1.500H4q-2 0-2-1.500l4-8z" fill="#f3d6e4" stroke="#865" strokeWidth=".8" /><path d="M4.500 9.500h7l2.300 5q-6 2-11.500 0z" fill="#d81f74" stroke="none" /></Svg>]} />
        </Group>
      </div>
      <div className="h-[21px] shrink-0 mr-[3px] bg-gradient-to-b from-white to-[#f0f0f0] border-t border-[#888] flex items-center">
        <span className="w-[22px] flex pl-[2px]"><Svg s="w-[13px] h-[14px]"><path d="M2 5l8-4 3 1v5H2z" fill="#fff" stroke="#3f7a2a" /><path d="M1 6h5l1-1h8l-1 10H1z" fill="#8fc66f" stroke="#3f7a2a" /></Svg></span>
        <span className="w-[22px] flex"><Svg s="w-[15px] h-[15px]"><path d="M1 1h14v14H2.500L1 13.500z" fill="#1f6ee0" stroke="#123f92" /><path d="M4 1.500h8v6H4z" fill="#eef" stroke="none" /><path d="M4.500 10h7v5h-7z" fill="#222" stroke="none" /><path d="M5.500 11h2v3h-2z" fill="#fff" stroke="none" /></Svg></span>
        <span className="w-[90px] h-[16px] border border-[#a9a9a9] bg-white flex items-center justify-between pl-[2px] pr-[3px] text-[8.500px]">100%<Svg s="w-[6px] h-[6px]"><path d="M1 4l7 7 7-7" stroke="#555" strokeWidth="2" /></Svg></span>
        <span className="w-[21px] flex pl-[4px]"><Svg s="w-[15px] h-[15px]"><path d="M1 6V1h5M10 1h5v5M15 10v5h-5M6 15H1v-5" strokeWidth="2.600" stroke="#111" /><path d="M6 6l4 4M10 6l-4 4" strokeWidth="1.500" /></Svg></span>
        <span className="w-[4px] h-[2px] ml-[2px] bg-black [clip-path:polygon(0_0,100%_0,50%_100%)]" />
        <span className="ml-[4px] w-[16px]"><Svg s="w-[15px] h-[14px]"><path d="M.5 8Q8-1 15.500 8 8 16 .5 8z" fill="#e7f4fa" stroke="#333" strokeWidth="1.300" /><circle cx="8" cy="8" r="3.900" fill="#2fa2d6" stroke="#125" /><circle cx="8" cy="8" r="1.400" fill="#111" stroke="none" /></Svg></span>
        <span className="w-[4px] h-[2px] ml-[4px] bg-black [clip-path:polygon(0_0,100%_0,50%_100%)]" />
        <span className="ml-[3px]"><Svg s="w-[15px] h-[14px]"><path d="M1 9q2-5 3-3t-1 7q3 2 6-1" stroke="#111" strokeWidth="1.200" /><path d="M6 10L11 2l4 1v4l-6 6-3 0z" fill="#ee6a5c" stroke="#801" strokeWidth=".6" /><path d="M6 10l3-4 3 3-3 4-3 0z" fill="#c81810" stroke="none" /></Svg></span>
        <div className="ml-auto flex items-center pr-[1px]">
          <span className="w-[19px]"><Svg s="w-[13px] h-[14px]"><path d="M3 5l4-4q3-1 6 3v4H3z" fill="#e6e6e6" stroke="#888" /><ellipse cx="8" cy="11.500" rx="6.500" ry="3.500" fill="#333" stroke="#111" /></Svg></span>
          <span className="w-[17px]"><Svg s="w-[15px] h-[15px]"><path d="M1 8l6-6q3-1 5 1l3 4q1 2-1 4l-4 4q-3 1-5-1l-3-3q-1-1 0-3z" fill="#fff" stroke="#444" /><path d="M4 5l8 7M7 2l8 7" stroke="#444" /></Svg></span>
          <span className="w-[18px] h-[18px] border border-[#3c9be8] bg-[#d5eafa] flex items-center justify-center"><Svg s="w-[14px] h-[14px]"><path d="M1 8l6-6q3-1 5 1l3 3q1 2-1 4l-4 4q-3 1-5-1l-3-2q-1-2 0-3z" fill="#cb1512" stroke="#600" /><ellipse cx="11" cy="5.500" rx="3" ry="2.500" fill="#a80d0a" stroke="#ef5a50" strokeWidth=".7" /></Svg></span>
          <span className="ml-[6px] pl-[7px] border-l border-[#ccc] w-[26px]"><Svg s="w-[14px] h-[14px]"><path d="M0 9l3-3 8 6-3 3q-6 1-8-6z" fill="#eee" stroke="#444" /><path d="M3 4l4-3q6 0 8 4l0 5-3 2z" fill="#5eaf2c" stroke="#244d10" /><path d="M1 2l13 12" /></Svg></span>
          <span className="w-[15px]"><Svg s="w-[14px] h-[14px]"><circle cx="8" cy="8" r="6.800" fill="#eee" stroke="#666" /><path d="M8 1.200a6.800 6.800 0 000 13.600z" fill="#ee8a1d" stroke="#935" strokeWidth=".5" /></Svg></span>
          <span className="ml-[3px] pl-[4px] border-l border-[#ccc] w-[20px]"><Svg s="w-[13px] h-[13px]"><path d="M5 1h6l4.500 4.500v5L11 15H5L.5 10.500v-5z" fill="#6eb6f5" stroke="#1b4da0" /><path d="M4 6q3-4 7-1" stroke="#fff" /></Svg></span>
          <span className="w-[4px] h-[3px] ml-px bg-black [clip-path:polygon(0_0,100%_0,50%_100%)]" />
        </div>
      </div>
      <main className="relative h-[537px] w-[629px] shrink-0 overflow-hidden bg-[#a5d4e8] border-r border-[#eee]">
        <div className="absolute left-0 right-0 bottom-0 h-[21px] bg-[#d3cec7] border-t border-[#999]" />
        <div className="absolute inset-0 bg-[repeating-linear-gradient(90deg,rgba(60,100,120,0.09)_0_1px,transparent_1px_99px)] bg-[position:69px_0]" />
        <div className="absolute inset-0 top-[4px] bg-[repeating-linear-gradient(0deg,transparent_0_32px,rgba(60,100,120,0.09)_32px_33px)]" />
        <div className="relative flex h-full">
          <div className="w-[69.500px] shrink-0 flex flex-col overflow-hidden text-black font-['Liberation_Sans','Noto_Sans_CJK_SC',sans-serif]">
            {labels.map(([t, c], k) => <div key={k} className={`${c} shrink-0 flex items-center justify-end overflow-hidden`}>{t}</div>)}
          </div>
          {columns.map((col, k) => (
            <div key={k} className={`${col.c} w-[99.500px] shrink-0 flex flex-col items-stretch`}>
              {col.v.map((v, j) => (
                <div key={j} className={`${j < 3 ? "bg-[#d8d8d8]" : j < 6 ? "bg-[#d1d1d1]" : "bg-[#cacaca]"} h-[37.100px] pt-[3px] shrink-0 border-b border-l border-[#555] shadow-[inset_1px_1px_0_rgba(255,255,255,0.35),1px_0_0_#333] flex items-center justify-center text-[7.250px] text-black font-['Liberation_Mono',monospace]`}>{v}</div>
              ))}
            </div>
          ))}
        </div>
        <span className="absolute left-[60px] top-[31px]"><Waves /></span>
        <Port pos="left-[67px] top-[34px]" /><Port pos="left-[266px] top-[34px]" /><Port pos="left-[465px] top-[33px]" />
        <Port pos="left-[166px] top-[71px]" /><Port pos="left-[365px] top-[71px]" /><Port pos="left-[564px] top-[70px]" />
        <Panel pos="left-[169px] top-[382px]" size="w-[99px] h-[43px]" title="LID控制雨水量[m3]" path="{0}" value="932.584256" />
        <Panel pos="left-[369.500px] top-[382px]" size="w-[99px] h-[43px]" title="LID控制雨水量[m3]" path="{0;0}" value="266.579774" />
        <Panel pos="left-[571px] top-[382.500px]" size="w-[99px] h-[43px]" title="LID控制雨水量[m3]" value="233.665185" />
        <Panel pos="left-[74px] top-[456px]" size="w-[115px] h-[53.500px]" title="年径流总量控制率%" path="{0}" value="78.517971" />
        <div className="absolute left-0 bottom-0 w-[5px] h-[19px] rounded-tr-[2px] border border-[#444] bg-gradient-to-b from-[#ccc] to-[#777]" />
        <svg className="absolute left-[593px] top-[496px] w-[34px] h-[36px]" viewBox="0 0 34 36" fill="none">
          <defs><radialGradient id="dial"><stop offset="0" stopColor="#fafafa" /><stop offset="1" stopColor="#b9b9b9" /></radialGradient></defs>
          <circle cx="16.500" cy="20.500" r="13.500" fill="url(#dial)" stroke="#555" />
          <circle cx="16.500" cy="20.500" r="12" stroke="#fff" strokeWidth="1.300" />
          <path d="M2.500 20.500a14 14 0 0128 0" stroke="#000" strokeWidth="2.200" />
          <path d="M9 1l5 3-3 5z" fill="#000" /><path d="M11 9l4 2-2 2zM26 17l3-2-1 4zM4 23l4 1-3 3zM19 32l1-4 2 4z" fill="#fff" />
        </svg>
      </main>
      <footer className="h-[17px] shrink-0 flex items-center pl-[2px] text-[8.400px] border-t border-white">
        <Svg s="w-[11px] h-[11px]"><circle cx="8" cy="8" r="7.500" fill="#1567b7" stroke="#113a78" /><path d="M5 3v6q3 5 6 0V3M8 4v5M8 12v2" stroke="#d9f2ff" strokeWidth="1.400" /></Svg>
        <span className="ml-[1px]">Solution completed in ~7.3 seconds (34 seconds ago)</span>
        <span className="ml-auto mr-[12px] text-[#777]">1.0.0007</span>
        <span className="mr-[3px] mt-[7px]"><Svg s="w-[8px] h-[8px]"><path d="M13 2v2M13 7v2M13 12v2M8 7v2M8 12v2M3 12v2" stroke="#999" strokeWidth="2" /></Svg></span>
      </footer>
    </section>
  );
}

export default function App() {
  return (
    <div className="relative flex w-[1266px] h-[686px] overflow-hidden bg-white">
      <Rhino />
      <Grasshopper />
      <div className="absolute right-[1px] top-0 h-full w-px bg-[#333]" />
    </div>
  );
}
